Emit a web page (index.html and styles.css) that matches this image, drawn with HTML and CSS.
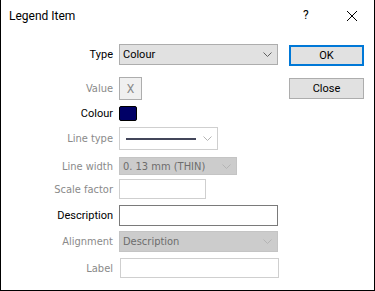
FILE: index.html
```html
<!DOCTYPE html>
<html lang="en">
<head>
    <meta charset="UTF-8">
    <title>Legend Item</title>
    <link rel="stylesheet" href="styles.css">
</head>
<body>
    <div class="dialog">
        <div class="titlebar">
            <span class="title">Legend Item</span>
            <span class="help">?</span>
            <span class="close-x">
                <svg width="12" height="12" viewBox="0 0 12 12"><path d="M1 1 L11 11 M11 1 L1 11" stroke="#000" stroke-width="1" fill="none"/></svg>
            </span>
        </div>
        <div class="content">
            <div class="form">
                <div class="row row-type">
                    <label class="lbl">Type</label>
                    <div class="combo combo-type">
                        <span>Colour</span>
                        <svg class="chev" width="9" height="5" viewBox="0 0 9 5"><path d="M0.5 0.5 L4.5 4.5 L8.5 0.5" stroke="#606060" fill="none"/></svg>
                    </div>
                </div>
                <div class="row row-value">
                    <label class="lbl lbl-off">Value</label>
                    <div class="value-box">X</div>
                </div>
                <div class="row row-colour">
                    <label class="lbl">Colour</label>
                    <div class="swatch"></div>
                </div>
                <div class="row row-linetype">
                    <label class="lbl lbl-off">Line type</label>
                    <div class="combo combo-line">
                        <span class="line-sample"></span>
                        <svg class="chev" width="9" height="5" viewBox="0 0 9 5"><path d="M0.5 0.5 L4.5 4.5 L8.5 0.5" stroke="#b4b4b4" fill="none"/></svg>
                    </div>
                </div>
                <div class="row row-linewidth">
                    <label class="lbl lbl-off">Line width</label>
                    <div class="combo combo-off combo-width">
                        <span>0. 13 mm (THIN)</span>
                        <svg class="chev" width="9" height="5" viewBox="0 0 9 5"><path d="M0.5 0.5 L4.5 4.5 L8.5 0.5" stroke="#b4b4b4" fill="none"/></svg>
                    </div>
                </div>
                <div class="row row-scale">
                    <label class="lbl lbl-off">Scale factor</label>
                    <div class="input input-off input-scale"></div>
                </div>
                <div class="row row-desc">
                    <label class="lbl">Description</label>
                    <div class="input input-desc"></div>
                </div>
                <div class="row row-align">
                    <label class="lbl lbl-off">Alignment</label>
                    <div class="combo combo-off combo-wide">
                        <span>Description</span>
                        <svg class="chev" width="9" height="5" viewBox="0 0 9 5"><path d="M0.5 0.5 L4.5 4.5 L8.5 0.5" stroke="#b4b4b4" fill="none"/></svg>
                    </div>
                </div>
                <div class="row row-label">
                    <label class="lbl lbl-off">Label</label>
                    <div class="input input-off input-label"></div>
                </div>
            </div>
            <div class="buttons">
                <button class="btn btn-default">OK</button>
                <button class="btn btn-close">Close</button>
            </div>
        </div>
    </div>
</body>
</html>
```

FILE: styles.css
```css
body {
    margin: 0;
    background-color: white;
    font-family: Roboto, "Noto Sans", sans-serif;
}
.dialog {
    width: 375px;
    height: 291px;
    box-sizing: border-box;
    border: 1px solid #000;
    border-top: none;
    background: #fff;
}
.titlebar {
    height: 31px;
    display: flex;
    align-items: center;
    position: relative;
}
.title {
    margin-left: 8px;
    font-size: 12px;
    color: #000;
}
.help {
    position: absolute;
    left: 302px;
    top: 8px;
    font-size: 12px;
}
.close-x {
    position: absolute;
    left: 345px;
    top: 10px;
    line-height: 0;
}
.content {
    display: flex;
}
.form {
    width: 287px;
}
.row {
    display: flex;
    align-items: center;
}
.lbl {
    width: 112px;
    margin-right: 6px;
    text-align: right;
    font-size: 11px;
    color: #000;
}
.lbl-off {
    font-family: "DejaVu Sans Condensed", "DejaVu Sans", sans-serif;
    font-size: 11px;
    color: #8a8a8a;
}
.row-type { margin-top: 13px; height: 21px; }
.row-value { margin-top: 12px; height: 23px; }
.row-colour { margin-top: 6px; height: 15px; }
.row-linetype { margin-top: 6px; height: 23px; }
.row-linewidth { margin-top: 7px; height: 18px; }
.row-scale { margin-top: 4px; height: 20px; }
.row-desc { margin-top: 6px; height: 21px; }
.row-align { margin-top: 5px; height: 21px; }
.row-label { margin-top: 6px; height: 20px; }

.combo {
    box-sizing: border-box;
    height: 100%;
    display: flex;
    align-items: center;
    justify-content: space-between;
    padding: 0 5px 0 3px;
    border: 1px solid #adadad;
    background: #e1e1e1;
    font-size: 11px;
    color: #000;
}
.combo-type {
    width: 159px;
}
.combo-line {
    width: 99px;
    background: #fff;
    border-color: #cfcfcf;
    padding-left: 6px;
}
.line-sample {
    width: 70px;
    height: 2px;
    background: #43465a;
}
.combo-off {
    background: #cccccc;
    border-color: #c4c4c4;
    color: #6d6d6d;
    font-family: "DejaVu Sans Condensed", "DejaVu Sans", sans-serif;
    font-size: 11px;
}
.combo-width {
    width: 118px;
}
.combo-wide {
    width: 159px;
}
.value-box {
    box-sizing: border-box;
    width: 23px;
    height: 23px;
    border: 1px solid #adadad;
    background: #f0f0f0;
    color: #8a8a8a;
    font-size: 12px;
    display: flex;
    align-items: center;
    justify-content: center;
}
.swatch {
    width: 16px;
    height: 13px;
    border: 1px solid #000;
    border-radius: 2px;
    background: #000066;
}
.input {
    box-sizing: border-box;
    height: 100%;
    border: 1px solid #7a7a7a;
    background: #fff;
}
.input-off {
    border-color: #cfcfcf;
}
.input-scale {
    width: 87px;
}
.input-desc {
    width: 159px;
}
.input-label {
    width: 159px;
    margin-left: 1px;
}
.buttons {
    display: flex;
    flex-direction: column;
    padding-top: 14px;
    margin-left: 1px;
}
.btn {
    box-sizing: border-box;
    width: 75px;
    height: 21px;
    padding: 0;
    border: 1px solid #adadad;
    background: #e1e1e1;
    font-family: Roboto, "Noto Sans", sans-serif;
    font-size: 11px;
    color: #000;
}
.btn-default {
    border: 2px solid #0078d7;
}
.btn-close {
    margin-top: 12px;
}
```
